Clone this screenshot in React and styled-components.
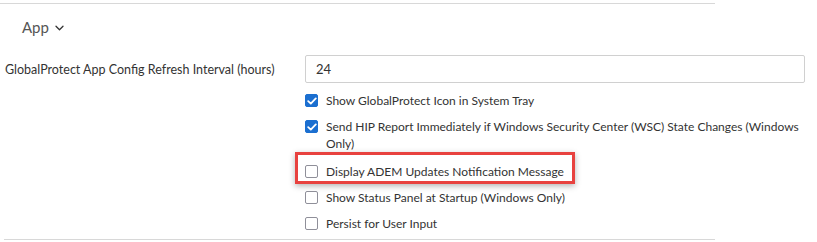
import React from "react";
import styled, { createGlobalStyle } from "styled-components";

const Global = createGlobalStyle`
  html, body { margin: 0; padding: 0; background: #fff; }
  body { font-family: Lato, "Open Sans", "Liberation Sans", sans-serif; color: #333; }
  * { box-sizing: border-box; }
`;

const Section = styled.section`
  width: 715px;
  margin-top: 3px;
  border-top: 1px solid #d8d8d8;
`;

const Header = styled.div`
  display: flex;
  align-items: center;
  gap: 6px;
  padding: 14px 0 0 22px;
  height: 33px;
  font-size: 15px;
  line-height: 19px;
  color: #555;
`;

const Form = styled.div`
  display: grid;
  grid-template-columns: 305px 500px;
  row-gap: 9px;
  margin-top: 18px;
`;

const Label = styled.label`
  display: flex;
  align-items: center;
  padding-left: 5px;
  font-size: 12.5px;
  color: #333;
  height: 28px;
`;

const Input = styled.input`
  width: 500px;
  height: 28px;
  border: 1px solid #d0d0d0;
  border-radius: 2px;
  padding: 0 10px;
  font-family: inherit;
  font-size: 13px;
  color: #333;
  outline: none;
`;

const Options = styled.div`
  grid-column: 2;
  display: flex;
  flex-direction: column;
  align-items: flex-start;
  gap: 9px;
`;

const Row = styled.div`
  position: relative;
  display: flex;
  align-items: flex-start;
  gap: 8px;
  font-size: 12px;
  line-height: 17px;
  color: #333;
  margin-top: ${(p) => (p.$highlight ? "2px" : "0")};
  &::before {
    content: ${(p) => (p.$highlight ? '""' : "none")};
    position: absolute;
    top: -11px;
    left: -10px;
    right: -11px;
    bottom: -4px;
    border: 3px solid #e8423f;
    box-shadow: 0 2px 6px rgba(0, 0, 0, 0.3);
    pointer-events: none;
  }
`;

const Box = styled.span`
  flex: none;
  width: 13px;
  height: 13px;
  margin-top: 2px;
  border-radius: 2px;
  border: 1px solid ${(p) => (p.$checked ? "#1b6fd0" : "#8f8f99")};
  background: ${(p) => (p.$checked ? "#1b6fd0" : "#fff")};
  display: flex;
  align-items: center;
  justify-content: center;
`;

const Text = styled.span`
  max-width: 479px;
`;

const Rule = styled.div`
  width: 711px;
  margin-left: 4px;
  margin-top: 7px;
  border-top: 1px solid #d8d8d8;
`;

const Chevron = () => (
  <svg width="9" height="6" viewBox="0 0 9 6" fill="none">
    <path d="M1 1.2l3.5 3.5L8 1.2" stroke="#333" strokeWidth="1.3" strokeLinecap="round" strokeLinejoin="round" />
  </svg>
);

const Check = () => (
  <svg width="10" height="8" viewBox="0 0 10 8" fill="none">
    <path d="M1.2 4.2l2.6 2.4L8.8 1.4" stroke="#fff" strokeWidth="1.8" strokeLinecap="round" strokeLinejoin="round" />
  </svg>
);

const Option = ({ checked, highlight, children }) => (
  <Row $highlight={highlight}>
    <Box $checked={checked}>{checked && <Check />}</Box>
    <Text>{children}</Text>
  </Row>
);

export default function App() {
  return (
    <>
      <Global />
      <Section>
        <Header>
          App <Chevron />
        </Header>
        <Form>
          <Label>GlobalProtect App Config Refresh Interval (hours)</Label>
          <Input defaultValue="24" />
          <Options>
            <Option checked>Show GlobalProtect Icon in System Tray</Option>
            <Option checked>
              Send HIP Report Immediately if Windows Security Center (WSC) State Changes (Windows Only)
            </Option>
            <Option highlight>Display ADEM Updates Notification Message</Option>
            <Option>Show Status Panel at Startup (Windows Only)</Option>
            <Option>Persist for User Input</Option>
          </Options>
        </Form>
        <Rule />
      </Section>
    </>
  );
}
